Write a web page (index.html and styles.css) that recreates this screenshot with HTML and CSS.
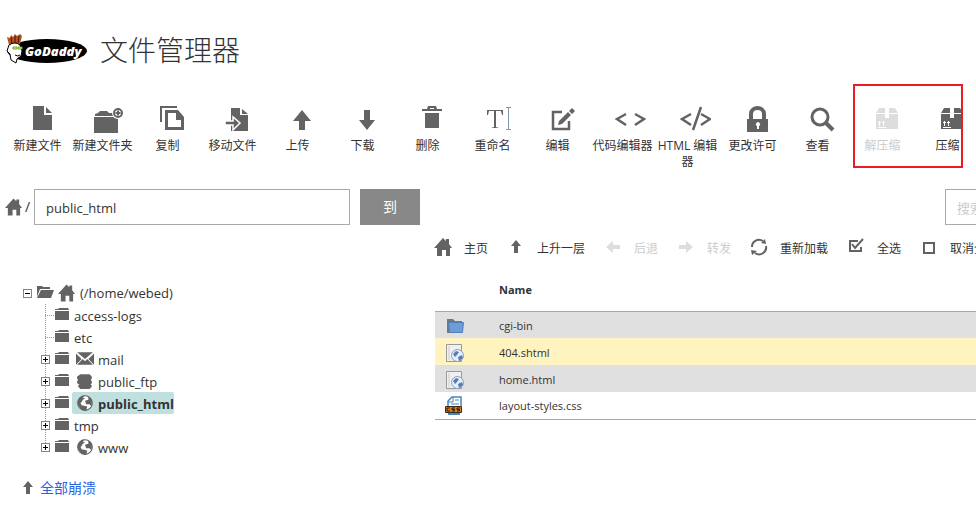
FILE: index.html
```html
<!DOCTYPE html>
<html lang="zh-CN">
<head>
<meta charset="utf-8">
<title>文件管理器</title>
<link rel="stylesheet" href="styles.css">
</head>
<body>
<svg class="sprite" aria-hidden="true">
  <symbol id="home" viewBox="0 0 18 18"><path d="M0 10 9 0l3 3V1h3v5l3 4h-2v8h-4v-6H8v6H3v-8z"/></symbol>
  <symbol id="file" viewBox="0 0 28 28"><path d="M5 1h11v9h8v15H5z"/><path d="M18 2l6 6h-6z"/></symbol>
  <symbol id="newfolder" viewBox="0 0 32 28"><path d="M0 12h24v16H0z"/><path d="M1 11V9l3-1 2-2h7l2 2h4l1 3z"/><circle cx="24" cy="8" r="6" fill="#fff"/><circle cx="24" cy="8" r="4" fill="none" stroke="currentColor" stroke-width="2"/><path d="M24 5.500v5M21.500 8h5" stroke="currentColor" stroke-width="2"/></symbol>
  <symbol id="copy" viewBox="0 0 28 28"><path d="M3 17V2h16" fill="none" stroke="currentColor" stroke-width="2"/><path fill-rule="evenodd" d="M7 5h13l6 7v13H7zM10 8v14h13v-7h-5V8z"/></symbol>
  <symbol id="move" viewBox="0 0 28 28"><path d="M8 3h9v7h8v16H8z"/><path d="M19 4l6 5h-6z"/><path d="M2 16h8v-4l7 6-7 7v-5H2z" stroke="#fff" stroke-width="1.500"/></symbol>
  <symbol id="up" viewBox="0 0 28 28"><path d="M14 5l9 11h-6v9h-6v-9H5z"/></symbol>
  <symbol id="down" viewBox="0 0 28 28"><path d="M14 25L6 15h5V5h6v10h5z"/></symbol>
  <symbol id="trash" viewBox="0 0 28 28"><path d="M4 4h5l1-3h8l1 3h5v2H4z"/><path d="M12 3h4v1h-4z" fill="#fff"/><path d="M7 8h14v15H7z"/></symbol>
  <symbol id="rename" viewBox="0 0 28 28"><path d="M4 5h16v5h-1l-1-4h-5v16l3 1H8l3-1V6H6l-1 4H4z"/><path d="M23 2h5v1h-2v21h2v1h-5v-1h2V3h-2z" fill="#7f97ad"/></symbol>
  <symbol id="edit" viewBox="0 0 28 28"><path d="M14 7H5v17h16v-8" fill="none" stroke="currentColor" stroke-width="2.500"/><path d="M10 20l1-4 9-9 3 3-9 9zM21 6l3-3 3 3-3 3z"/></symbol>
  <symbol id="code" viewBox="0 0 32 28"><path d="M12 9L3 14l9 6M21 9l9 5-9 6" fill="none" stroke="currentColor" stroke-width="2.500"/></symbol>
  <symbol id="html" viewBox="0 0 32 28"><path d="M12 9L3 14l9 6M22 9l9 5-9 6M22 2l-8 23" fill="none" stroke="currentColor" stroke-width="2.500"/></symbol>
  <symbol id="lock" viewBox="0 0 28 28"><path d="M8 14V9c0-8 13-8 13 0v5" fill="none" stroke="currentColor" stroke-width="4"/><path d="M4 14h21v13H4z"/><path d="M14 21a2 2 0 1 1 2 0v3h-2z" fill="#fff"/></symbol>
  <symbol id="search" viewBox="0 0 28 28"><circle cx="12" cy="12" r="8" fill="none" stroke="currentColor" stroke-width="3"/><path d="M18 18l7 7" stroke="currentColor" stroke-width="4"/></symbol>
  <symbol id="box" viewBox="0 0 28 28"><path d="M6 3h6v5H3zM16 3h6l3 5h-9z"/><path d="M3 9h9v4h4V9h9v15H3z"/><path d="M5 22.500h8M6.500 21v-5M10.500 21v-5M5 17.500h3M9 17.500h3" stroke="#fff"/></symbol>
  <symbol id="sup" viewBox="0 0 18 18"><path d="M9 2l5 6h-3v7H7V8H4z"/></symbol>
  <symbol id="left" viewBox="0 0 18 18"><path d="M2 9l7-6v4h7v4H9v4z"/></symbol>
  <symbol id="right" viewBox="0 0 18 18"><path d="M16 9L9 3v4H2v4h7v4z"/></symbol>
  <symbol id="reload" viewBox="0 0 18 18"><path d="M2 9a7 7 0 0 1 11-6M16 8a7 7 0 0 1-11 7" fill="none" stroke="currentColor" stroke-width="2"/><path d="M11 5l5 1-1-5zM7 13l-6-1 1 5z"/></symbol>
  <symbol id="check" viewBox="0 0 18 18"><path d="M11 3H3v10h11V9" fill="none" stroke="currentColor" stroke-width="2"/><path d="M5 6l3 4 8-9" fill="none" stroke="currentColor" stroke-width="2"/></symbol>
  <symbol id="square" viewBox="0 0 18 18"><path d="M4 5h10v10H4z" fill="none" stroke="currentColor" stroke-width="2"/></symbol>
  <symbol id="folder" viewBox="0 0 16 16"><path d="M1 4h14v9H1zM1 3V2h3l1-1h9l1 2z"/></symbol>
  <symbol id="open" viewBox="0 0 18 16"><path d="M1 12V1h5l1 1h7v2H4zM5 5h13l-3 8H1z"/></symbol>
  <symbol id="mail" viewBox="0 0 16 16"><path d="M1 2h14L8 8zM0 3l5 5-5 5zM16 3l-5 5 5 5zM1 13l5-5 2 2 2-2 5 5z"/></symbol>
  <symbol id="server" viewBox="0 0 16 16"><path d="M4 2h8l2 2v2l-1 1 1 1v2l-1 1 1 1v1l-2 2H4l-2-2v-1l1-1-2-1V8l1-1-1-1V4z"/></symbol>
  <symbol id="globe" viewBox="0 0 16 16"><circle cx="8" cy="8" r="6.500" fill="#fff" stroke="currentColor"/><path d="M2 10C0 4 5 1 8 1L6 3l2 1-2 1-1 2-1 1 1 2 5 1-1 4-4-1zM11 2l3 3v6l-2-2-3 0-1-3 3-1z"/></symbol>
  <symbol id="page" viewBox="0 0 20 20"><path d="M1.500 1.500h15v17h-15z" fill="#f0f0f0" stroke="#999"/><path d="M4 3v14" stroke="#ccc"/><circle cx="12.500" cy="12.500" r="6" fill="#e4effb" stroke="#8a9fbd"/><path d="M8 11l3-3 3 1-2 3-2 2zM13 14l4-2 1 3-4 3z" fill="#587bb5"/></symbol>
</svg>

<header class="header">
  <svg class="logo" viewBox="0 0 84 32" role="img" aria-label="GoDaddy">
    <ellipse cx="42" cy="17" rx="40" ry="12"/>
    <path d="M4 11L2 3l3 1 1-3 2 2 2-3 2 2 3-2 2 2-2 8z" fill="#b9511e"/>
    <path d="M6 3l1 7M10 2v7M14 2l-1 7" stroke="#3b160a"/>
    <path d="M4 11q6-4 11 0l2 6-1 5-4 3-1 4-5-3-1-6-3-3z" fill="#fff" stroke="#000"/>
    <path d="M8 13h4v2H8zM13 13h4v2h-4z" fill="#d4efa8" stroke="#6fae1e"/>
    <path d="M10 21q3 2 5 0" fill="none" stroke="#000"/>
    <text class="wordmark" x="20" y="22">GoDaddy</text>
  </svg>
  <h1 class="title">文件管理器</h1>
</header>

<nav class="toolbar">
  <button class="tool"><svg><use href="#file"/></svg><span>新建文件</span></button>
  <button class="tool"><svg class="wide"><use href="#newfolder"/></svg><span>新建文件夹</span></button>
  <button class="tool"><svg><use href="#copy"/></svg><span>复制</span></button>
  <button class="tool"><svg><use href="#move"/></svg><span>移动文件</span></button>
  <button class="tool"><svg><use href="#up"/></svg><span>上传</span></button>
  <button class="tool"><svg><use href="#down"/></svg><span>下载</span></button>
  <button class="tool"><svg><use href="#trash"/></svg><span>删除</span></button>
  <button class="tool"><svg><use href="#rename"/></svg><span>重命名</span></button>
  <button class="tool"><svg><use href="#edit"/></svg><span>编辑</span></button>
  <button class="tool"><svg class="wide"><use href="#code"/></svg><span>代码编辑器</span></button>
  <button class="tool"><svg class="wide"><use href="#html"/></svg><span>HTML 编辑器</span></button>
  <button class="tool"><svg><use href="#lock"/></svg><span>更改许可</span></button>
  <button class="tool"><svg><use href="#search"/></svg><span>查看</span></button>
  <button class="tool" disabled><svg><use href="#box"/></svg><span>解压缩</span></button>
  <button class="tool"><svg><use href="#box"/></svg><span>压缩</span></button>
  <div class="callout"></div>
</nav>

<form class="pathbar">
  <a href="#" class="homelink" aria-label="主页"><svg class="home"><use href="#home"/></svg></a>
  <label class="slash" for="path">/</label>
  <input class="field path" id="path" type="text" value="public_html">
  <button class="go" type="button">到</button>
  <input class="field find" type="search" placeholder="搜索" aria-label="搜索">
</form>

<div class="panes">
  <aside class="sidebar">
    <div class="node root"><button class="toggle minus" aria-label="折叠"></button><svg class="open"><use href="#open"/></svg><a href="#" class="name"><svg class="home"><use href="#home"/></svg>(/home/webed)</a></div>
    <ul class="tree">
      <li class="node"><i class="stub"></i><svg class="folder"><use href="#folder"/></svg><a href="#" class="name">access-logs</a></li>
      <li class="node"><i class="stub"></i><svg class="folder"><use href="#folder"/></svg><a href="#" class="name">etc</a></li>
      <li class="node"><button class="toggle" aria-label="展开"></button><svg class="folder"><use href="#folder"/></svg><a href="#" class="name"><svg class="kind"><use href="#mail"/></svg>mail</a></li>
      <li class="node"><button class="toggle" aria-label="展开"></button><svg class="folder"><use href="#folder"/></svg><a href="#" class="name"><svg class="kind"><use href="#server"/></svg>public_ftp</a></li>
      <li class="node"><button class="toggle" aria-label="展开"></button><svg class="folder"><use href="#folder"/></svg><a href="#" class="name current"><svg class="kind"><use href="#globe"/></svg>public_html</a></li>
      <li class="node"><button class="toggle" aria-label="展开"></button><svg class="folder"><use href="#folder"/></svg><a href="#" class="name">tmp</a></li>
      <li class="node"><button class="toggle" aria-label="展开"></button><svg class="folder"><use href="#folder"/></svg><a href="#" class="name"><svg class="kind"><use href="#globe"/></svg>www</a></li>
    </ul>
    <a href="#" class="collapse"><svg><use href="#sup"/></svg>全部崩溃</a>
  </aside>

  <main class="content">
    <div class="actions">
      <button class="action"><svg><use href="#home"/></svg><span>主页</span></button>
      <button class="action"><svg><use href="#sup"/></svg><span>上升一层</span></button>
      <button class="action" disabled><svg><use href="#left"/></svg><span>后退</span></button>
      <button class="action" disabled><svg><use href="#right"/></svg><span>转发</span></button>
      <button class="action"><svg><use href="#reload"/></svg><span>重新加载</span></button>
      <button class="action"><svg><use href="#check"/></svg><span>全选</span></button>
      <button class="action"><svg><use href="#square"/></svg><span>取消全选</span></button>
    </div>
    <table class="files">
      <thead><tr><th class="icon"></th><th>Name</th></tr></thead>
      <tbody>
        <tr class="shade"><td class="icon"><svg viewBox="0 0 20 20"><path d="M2 3h6l2 2h7v12H2z" fill="#777"/><path d="M3.500 6.500h15l-1 10h-13z" fill="#6c9dd6" stroke="#4f7fba"/></svg></td><td>cgi-bin</td></tr>
        <tr class="selected"><td class="icon"><svg><use href="#page"/></svg></td><td>404.shtml</td></tr>
        <tr class="shade"><td class="icon"><svg><use href="#page"/></svg></td><td>home.html</td></tr>
        <tr><td class="icon"><svg viewBox="0 0 20 20"><path d="M3 10V5l4-4h9v9" fill="#fff" stroke="#4a84bd" stroke-width="1.500"/><path d="M3 6h5V1M10 4h4M6 8h8" fill="none" stroke="#4a84bd"/><path d="M.500 10.500h16v6H.500z" fill="#e07b1c" stroke="#3d2b1a"/><path d="M3 17h12v2H3z" fill="#4a84bd"/><path d="M5 12H2v3h3M10 12H7v1.500h2.500V15H7M15 12h-3v1.500h2.500V15H12" fill="none" stroke="#2c1a08"/></svg></td><td>layout-styles.css</td></tr>
      </tbody>
    </table>
  </main>
</div>
</body>
</html>
```
FILE: styles.css
```css
* { box-sizing: border-box; }
html { overflow: hidden; }
body {
  margin: 0;
  min-width: 1150px;
  background: #fff;
  color: #333;
  font: 12px/16px "Open Sans", "Noto Sans CJK SC", sans-serif;
}
button, input { font: inherit; color: inherit; }
button { padding: 0; border: 0; background: none; }
a { color: inherit; text-decoration: none; }
svg { flex: none; fill: currentColor; color: #636363; }
.sprite { position: absolute; width: 0; height: 0; }

.header { display: flex; align-items: center; gap: 11px; padding: 30px 5px 0; }
.logo { width: 84px; height: 32px; color: #000; }
.wordmark { font: italic 800 13px "Open Sans", sans-serif; fill: #fff; }
.title { margin: 0; font-size: 28px; font-weight: 300; line-height: 40px; }

.toolbar { position: relative; display: flex; width: max-content; height: 84px; margin-top: 35px; padding-left: 5px; }
.tool { display: flex; flex-direction: column; align-items: center; gap: 5px; width: 65px; }
.tool svg { width: 28px; height: 28px; margin-left: 9px; }
.tool .wide { width: 32px; margin-left: 15px; }
.tool:disabled, .action:disabled { color: #ccc; }
.tool:disabled svg, .action:disabled svg { color: #ddd; }
.callout { position: absolute; top: -21px; left: 853px; width: 110px; height: 84px; border: 2px solid #ed1c24; pointer-events: none; }

.pathbar { display: flex; align-items: center; height: 36px; padding: 0 5px; }
.homelink { display: flex; }
.home { width: 17px; height: 18px; }
.slash { width: 12px; padding-left: 3px; font-size: 14px; }
.field { height: 36px; padding: 2px 11px 0; border: 1px solid #aaa; background: #fff; font-size: 13px; }
.path { width: 316px; }
.find { width: 200px; margin-left: auto; }
.find::placeholder { color: #ccc; }
.go { width: 60px; height: 36px; margin-left: 10px; background: #888; color: #fff; font-size: 14px; }

.panes { display: flex; align-items: flex-start; }
.sidebar { flex: none; width: 435px; padding: 57px 0 0 23px; font-size: 13px; }
.node { display: flex; align-items: center; height: 22px; }
.root { gap: 4px; }
.root .name { margin-left: 0; padding: 0; }
.root .home { margin-right: 5px; }
.open { width: 18px; height: 16px; }
.toggle {
  width: 9px; height: 9px; border: 1px solid #848484;
  background: linear-gradient(#000, #000) center / 5px 1px no-repeat, linear-gradient(#000, #000) center / 1px 5px no-repeat, #fff;
}
.minus { background: linear-gradient(#000, #000) center / 5px 1px no-repeat, #fff; }
.tree {
  margin: 0 0 0 18px; padding: 0; list-style: none;
  background: repeating-linear-gradient(#999 0 1px, transparent 1px 2px) 4px 0 / 1px 142px no-repeat;
}
.tree .toggle { margin-right: 4px; }
.stub { width: 9px; margin: 0 0 0 4px; border-top: 1px dotted #999; }
.folder { width: 16px; height: 16px; }
.name { display: flex; align-items: center; height: 22px; margin-left: 2px; padding: 2px 0 0 2px; }
.kind { width: 18px; height: 18px; margin: 0 4px 2px 2px; }
.current { border-radius: 2px; background: #c0e0df; font-weight: 700; }
.collapse { display: flex; align-items: center; gap: 3px; margin-top: 20px; margin-left: -4px; color: #2a63e0; font-size: 14px; line-height: 20px; }
.collapse svg { width: 18px; height: 18px; }

.content { flex: 1; }
.actions { display: flex; gap: 19px; height: 45px; padding-top: 12px; margin-left: -1px; }
.action { display: flex; align-items: center; gap: 12px; height: 20px; white-space: nowrap; }
.action svg { width: 18px; height: 18px; }
.action span { padding-top: 3px; }
.files { width: 100%; border-collapse: collapse; border-bottom: 1px solid #aaa; font-size: 11px; }
.files th { height: 41px; padding: 0; border-bottom: 1px solid #aaa; text-align: left; }
.files td { height: 27px; padding: 2px 0 0; }
.files .icon { width: 64px; padding-left: 10px; }
.files .icon svg { display: block; width: 20px; height: 20px; }
.shade { background: #e0e0e0; }
.selected { background: #fff3bf; }
```
